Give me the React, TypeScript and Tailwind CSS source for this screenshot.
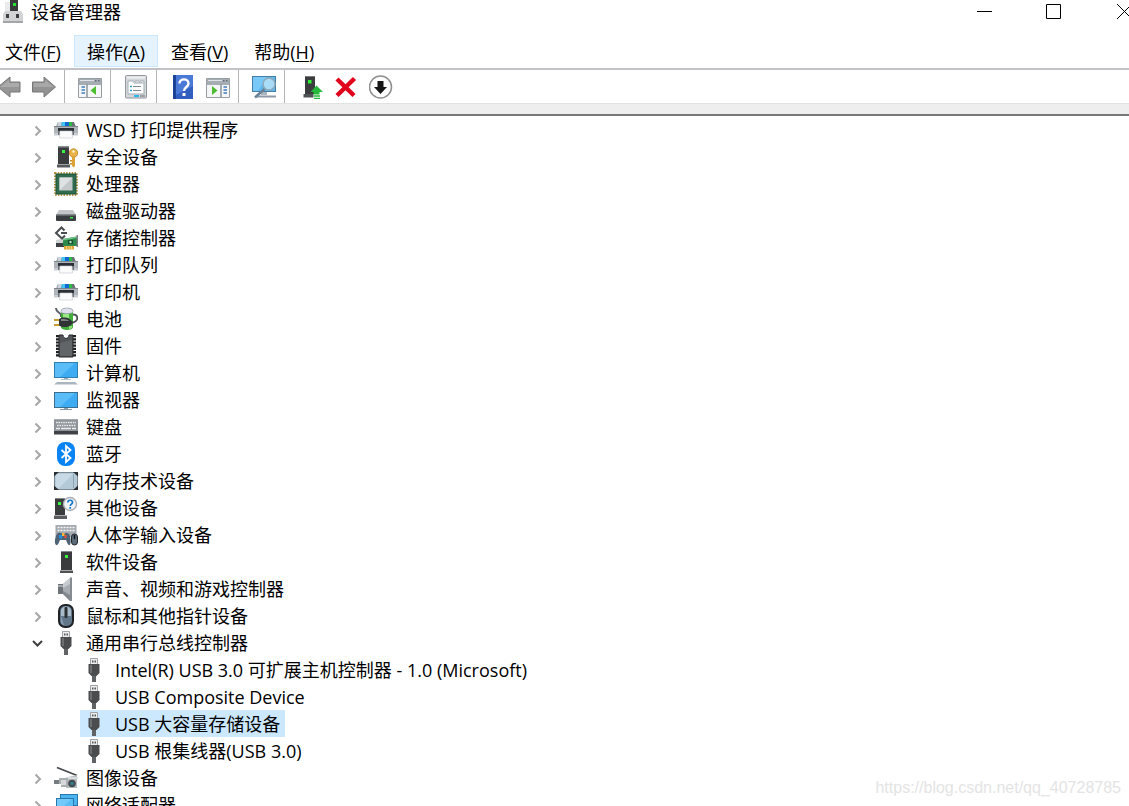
import { useState } from "react";
import type { ReactNode } from "react";
import clsx from "clsx";

type Device = { name: string; icon: ReactNode; children?: string[] };

const PrinterIcon = () => (
  <svg className="h-6 w-6" viewBox="0 0 24 24">
    <path d="M4 4h16l2 5H2z" fill="#6a7076" />
    <path d="M4 4h4L7 9H3z" fill="#c9d4dc" />
    <path d="M8 4h3.500v5H7z" fill="#3ec3f5" />
    <path d="M11 4h4v5h-4z" fill="#1467d0" />
    <path d="M15 4h2.500l1 5H15z" fill="#27c043" />
    <path d="M0 8h24v9H0z" fill="#aeb4ba" />
    <path d="M0 8h24v1H0z" fill="#7d848a" />
    <path d="M0 15h24v2.500H0z" fill="#c8ccd0" />
    <path d="M4 10h16v3H4z" fill="#2b3036" />
    <path d="M4 13h2v4H4zM18 13h2v4h-2z" fill="#6d737a" />
    <path d="M6 13h12l.5 7h-13z" fill="#fbfbfc" stroke="#c4c8cc" strokeWidth=".6" />
  </svg>
);

const SecurityIcon = () => (
  <svg className="h-6 w-6" viewBox="0 0 24 24">
    <path d="M4 1h11v18H4z" fill="#3a3c3e" />
    <path d="M4 1h11v1.500H4z" fill="#8a8e91" />
    <path d="M3 19h13v3.500H3z" fill="#56595b" />
    <path d="M3 19h13v1H3z" fill="#a0a3a5" />
    <path d="M8 5h3v3H8z" fill="#39f53f" />
    <circle cx="19.500" cy="8" r="4.200" fill="#e9b54a" stroke="#b87d1b" strokeWidth=".8" />
    <circle cx="19.500" cy="6.500" r="1.300" fill="#fff3d0" />
    <path d="M18 12h3v9l-1.500 1.500L18 21z" fill="#dda338" />
    <path d="M16 15h2v1.500h-2zM16 18h2v1.500h-2z" fill="#c48a22" />
  </svg>
);

const CpuIcon = () => (
  <svg className="h-6 w-6" viewBox="0 0 24 24">
    <rect x="1" y="1" width="22" height="22" fill="none" stroke="#b8923a" strokeWidth="2" strokeDasharray="1.400 1.400" />
    <rect x="2" y="2" width="20" height="20" fill="#2f6b4c" />
    <rect x="2" y="2" width="20" height="20" fill="none" stroke="#1f5238" />
    <rect x="5.500" y="5.500" width="13" height="13" fill="#c4c8ca" />
    <path d="M5.500 18.500l13-13h-13z" fill="#dfe2e3" />
  </svg>
);

const DiskIcon = () => (
  <svg className="h-6 w-6" viewBox="0 0 24 24">
    <path d="M5 11h14l3 5H2z" fill="#c3c6c8" />
    <path d="M2 15.500h20V21a1 1 0 0 1-1 1H3a1 1 0 0 1-1-1z" fill="#3b3e41" />
    <path d="M2 15.500h20v1H2z" fill="#8d9194" />
    <path d="M16 18h3v1.500h-3z" fill="#38e24a" />
  </svg>
);

const StorageIcon = () => (
  <svg className="h-6 w-6" viewBox="0 0 24 24">
    <path d="M2 14l4-1 5 2v6H2z" fill="#cfd2d4" />
    <path d="M2 17h9v4H2z" fill="#3d4043" />
    <path d="M10.500 4.500L7.500 1.500 2 7l6 5.500 3-3M7 7h6" fill="none" stroke="#4a4d50" strokeWidth="2" />
    <path d="M9 13l14-2.500V20H9z" fill="#2b8a4a" />
    <path d="M9 13l14-2.500V12L9 14.500z" fill="#6cc487" />
    <path d="M14 14h5v4h-5z" fill="#174d2a" />
    <circle cx="16.500" cy="16" r="1.200" fill="#b5e6c3" />
    <path d="M22.500 9H24v12h-1.500z" fill="#7c8083" />
    <path d="M10 20h10v3.500H10z" fill="#e0a636" />
    <path d="M12.500 20v3M15 20v3M17.500 20v3" stroke="#f6dc98" strokeWidth=".8" />
  </svg>
);

const BatteryIcon = () => (
  <svg className="h-6 w-6" viewBox="0 0 24 24">
    <path d="M2 1c0 4 3 4 5 6.500V10" fill="none" stroke="#5b6064" strokeWidth="2" />
    <path d="M7 4c0-4 12-4 12 0v16c0 4-12 4-12 0z" fill="#43ad3c" />
    <path d="M7 4c0-4 12-4 12 0v1.500c-3 1.500-9 1.500-12 0z" fill="#dfe0ee" stroke="#8f92a3" strokeWidth=".6" />
    <path d="M9 7h6v4H9z" fill="#9ae884" />
    <path d="M15 19h3v2l-3 1.500z" fill="#89dc76" />
    <path d="M19 7.500c4.500 0 4.500 3 4 5-1 2.500-3 2.500-5 3.500" fill="none" stroke="#4c4f52" strokeWidth="1.800" />
    <path d="M0 13h6M0 18h6" stroke="#caa034" strokeWidth="2" />
    <path d="M5 12l3-1.500h3c3 0 5 2 8 4.500-1 3-4 5-8 5H8l-3-1.500z" fill="#303336" />
    <path d="M7 12h3c3 0 4 1 5 2H7z" fill="#7d8184" />
  </svg>
);

const FirmwareIcon = () => (
  <svg className="h-6 w-6" viewBox="0 0 24 24">
    <path d="M3.500 1v22M20.500 1v22" stroke="#1f2123" strokeWidth="3" strokeDasharray="2.200 1" />
    <path d="M5 1h4c0 4.500 6 4.500 6 0h4v22H5z" fill="#525558" stroke="#26282a" />
    <path d="M6 9l12-3v16H6z" fill="#6c6f72" opacity=".6" />
  </svg>
);

const ComputerIcon = () => (
  <svg className="h-6 w-6" viewBox="0 0 24 24">
    <rect x=".5" y="1.500" width="23" height="15" fill="#3dacf2" stroke="#2f7eb0" />
    <path d="M1 2h20L6 16H1z" fill="#5bbdf8" />
    <path d="M10 17h4v1h-4z" fill="#9ab0bd" />
    <path d="M7 18h10v1H7z" fill="#b3c1ca" />
    <path d="M3 21h18l3 2.500H0z" fill="#a9b6c0" />
  </svg>
);

const MonitorIcon = () => (
  <svg className="h-6 w-6" viewBox="0 0 24 24">
    <rect x=".5" y="4.500" width="23" height="15" fill="#3dacf2" stroke="#3a6f90" />
    <path d="M1 5h20L6 19H1z" fill="#5bbdf8" />
    <path d="M10 20h4v1h-4z" fill="#8ba3b1" />
    <path d="M6 21h12v1H6z" fill="#8497a3" />
  </svg>
);

const KeyboardIcon = () => (
  <svg className="h-6 w-6" viewBox="0 0 24 24">
    <path d="M0 4h24v15H0z" fill="#8d9399" />
    <path d="M0 4h24v1H0z" fill="#a6abb0" />
    <path d="M2 7.500h20M3 10.500h19" stroke="#eceef0" strokeWidth="1.400" strokeDasharray="1.600 .8" />
    <path d="M2 13.500h4M7 13.500h10M18 13.500h4" stroke="#eceef0" strokeWidth="1.400" />
    <path d="M0 16h24v3.500H0z" fill="#3f4347" />
  </svg>
);

const BluetoothIcon = () => (
  <svg className="h-6 w-6" viewBox="0 0 24 24">
    <rect x="3" y="0" width="18" height="24" rx="8" fill="#0a84f5" />
    <path d="M7.500 8l9 8-4.500 4V4l4.500 4-9 8" fill="none" stroke="#fff" strokeWidth="1.800" />
  </svg>
);

const MemoryIcon = () => (
  <svg className="h-6 w-6" viewBox="0 0 24 24">
    <rect x=".500" y="3.500" width="23" height="17" rx="1.500" fill="#b4cad8" stroke="#7c8993" />
    <path d="M2 5h17L5 19H2z" fill="#c8dae5" />
    <path d="M19.500 5v14" stroke="#91a6b4" />
    <path d="M0 3h5L0 7.500zM24 3h-5l5 4.500zM0 21h5l-5-4.500zM24 21h-5l5-4.500z" fill="#2c2f32" />
  </svg>
);

const UnknownIcon = () => (
  <svg className="h-6 w-6" viewBox="0 0 24 24">
    <path d="M1 2h10v17H1z" fill="#3a3c3e" />
    <path d="M1 2h10v1H1z" fill="#83878a" />
    <path d="M0 20h13v3H0z" fill="#5a5d5f" />
    <path d="M0 19h13v1H0z" fill="#aaa" />
    <path d="M4 6h3v3H4z" fill="#39f53f" />
    <circle cx="16" cy="8" r="6.500" fill="#f1f5f8" stroke="#a9afb3" strokeWidth="1.400" />
    <path d="M13.800 6.500c0-3 4.700-3 4.700 0 0 1.600-2.300 1.600-2.300 3.500" fill="none" stroke="#1979c9" strokeWidth="1.700" />
    <path d="M15.300 11h1.800v1.800h-1.800z" fill="#1979c9" />
  </svg>
);

const HidIcon = () => (
  <svg className="h-6 w-6" viewBox="0 0 24 24">
    <path d="M1.500 2h21v12h-21z" fill="#a3a9ae" />
    <path d="M3.500 4.500h17M3.500 7.500h17" stroke="#f6f7f8" strokeWidth="1.600" strokeDasharray="2 1" />
    <path d="M3 11c2-2 4-1 5-.5h2c1-.5 4-1 5 .5 2 3 2 9 1 11-2 1-3-3-4-5H6c-1 2-2 6-4 5-2-2-1-8 1-11z" fill="#4f6376" />
    <path d="M5 12h3v4l-3-1z" fill="#1f8fe0" />
    <path d="M8 10h2.500v3H8z" fill="#ffb83b" />
    <path d="M10.500 12h2v3h-2z" fill="#f0532c" />
    <rect x="17.500" y="11" width="6" height="11" rx="3" fill="#5a6a78" stroke="#23282d" />
    <path d="M20.500 12v4" stroke="#15191c" strokeWidth="1.500" />
  </svg>
);

const SoftwareIcon = () => (
  <svg className="h-6 w-6" viewBox="0 0 24 24">
    <path d="M7 2h11v18H7z" fill="#3a3c3e" />
    <path d="M7 1h11v1H7z" fill="#83878a" />
    <path d="M6 21h13v2H6z" fill="#4f5254" />
    <path d="M6 20h13v1H6z" fill="#aaa" />
    <path d="M11 5h3v3h-3z" fill="#39f53f" />
  </svg>
);

const SpeakerIcon = () => (
  <svg className="h-6 w-6" viewBox="0 0 24 24">
    <path d="M4 7h5v10H4z" fill="#6d7378" />
    <path d="M4 8h5v2H4z" fill="#a2a8ac" />
    <path d="M9 7l7-6v23l-7-7z" fill="#a6acb1" />
    <path d="M9 7l7-6v6l-7 4z" fill="#c6cbcf" />
    <path d="M9 14l7 4v6l-7-7z" fill="#82888d" />
    <path d="M16 .5h2v23.500h-2z" fill="#858b90" />
  </svg>
);

const MouseIcon = () => (
  <svg className="h-6 w-6" viewBox="0 0 24 24">
    <rect x="5" y="1" width="14" height="22" rx="6" fill="#62778a" stroke="#202326" strokeWidth="2" />
    <path d="M7 7c0-6 10-6 10 0v5H7z" fill="#a9bac8" />
    <path d="M7 12v5c0 2 1 4 3 4.500z" fill="#8da2b4" />
    <rect x="10.500" y="3" width="3" height="11" rx="1" fill="#2b3034" />
  </svg>
);

const UsbIcon = () => (
  <svg className="h-6 w-6" viewBox="0 0 24 24">
    <path d="M8.500.5h7V7h-7z" fill="#eceded" stroke="#a0a3a5" />
    <path d="M10 2.500h1.500v2H10zM12.500 2.500H14v2h-1.500z" fill="#55585a" />
    <path d="M6.500 6h11v9l-3 3h-5l-3-3z" fill="#4a4c4e" />
    <path d="M8 7h2v8H8z" fill="#6c6f71" />
    <path d="M10 18h4v6h-4z" fill="#606365" />
  </svg>
);

const ImagingIcon = () => (
  <svg className="h-6 w-6" viewBox="0 0 24 24">
    <path d="M3 1.500l20 8" stroke="#44484b" strokeWidth="1.800" />
    <path d="M14 11l9-2v13H12z" fill="#b9bdc0" />
    <path d="M12 11h12v2H12z" fill="#d9dcde" />
    <path d="M0 14h9v4H0z" fill="#777c80" />
    <path d="M5 12h9v9H7v-3H5z" fill="#a9aeb1" />
    <path d="M7 14h5v5H7z" fill="#d6d8da" />
    <circle cx="18" cy="17.500" r="3.800" fill="#44494d" />
    <circle cx="18" cy="17.500" r="1.700" fill="#2d7f92" />
  </svg>
);

const NetworkIcon = () => (
  <svg className="h-6 w-6" viewBox="0 0 24 24">
    <rect x="6.500" y="1.500" width="17" height="11" fill="#4bb4f0" stroke="#2878ab" />
    <rect x="2.500" y="5.500" width="17" height="12" fill="#58bdf5" stroke="#2878ab" />
    <path d="M3 6h14L6 17H3z" fill="#72c9fa" />
    <path d="M7 20h9v2H7z" fill="#8ba3b1" />
  </svg>
);

// toolbar glyphs

const BackIcon = () => (
  <svg className="h-6 w-[21px]" viewBox="3 0 21 24">
    <path d="M1 12L13 2v5h10v10H13v5z" fill="#969696" stroke="#777" />
    <path d="M12 5v3h10v4H3z" fill="#ababab" />
  </svg>
);

const ForwardIcon = () => (
  <svg className="h-6 w-6" viewBox="0 0 24 24">
    <path d="M23.500 12L12 2v5H.5v10H12v5z" fill="#929292" stroke="#777" />
    <path d="M13 5v3H1.500v4H22z" fill="#a8a8a8" />
  </svg>
);

const TreePaneIcon = () => (
  <svg className="h-6 w-6" viewBox="0 0 24 24">
    <path d="M.5 3.500h23v19H.5z" fill="#f5f6f7" stroke="#969da3" />
    <path d="M1 4h22v4H1z" fill="#a6adb5" />
    <path d="M2 5.500h14" stroke="#dfe3e6" />
    <path d="M17 5h1.500v1.500H17zM20 5h1.500v1.500H20z" fill="#5f6a76" />
    <path d="M1 9h22M9 9v13" stroke="#8b949c" strokeWidth="1.500" />
    <path d="M3.500 12H7M3.500 15H7M3.500 18H7" stroke="#3f7bc1" strokeWidth="1.500" />
    <path d="M18 11v9l-5.500-4.500z" fill="#4cbd31" />
  </svg>
);

const PropertiesIcon = () => (
  <svg className="h-6 w-6" viewBox="0 0 24 24">
    <rect x="1.500" y=".5" width="21" height="22.500" rx="1" fill="#d5d8db" stroke="#90969b" />
    <path d="M3 2.500h18" stroke="#eceeef" strokeWidth="2" />
    <path d="M4 6h6v2h10v11H4z" fill="#fff" stroke="#a3adb5" />
    <path d="M11 6h4v2M16 6h4v2" fill="#fff" stroke="#a3adb5" />
    <path d="M6 11.500h2M6 15.500h2" stroke="#32a4d8" strokeWidth="1.500" />
    <path d="M9 11.500h8M9 15.500h8" stroke="#7f8a93" />
    <path d="M10 21h5" stroke="#2fb8e9" strokeWidth="2" />
    <path d="M16 21h5" stroke="#9ba3a9" strokeWidth="2" />
  </svg>
);

const HelpIcon = () => (
  <svg className="h-6 w-6" viewBox="0 0 24 24">
    <path d="M3 0h20v24H3z" fill="#315fc0" />
    <path d="M3 0h3v24H3z" fill="#1d4397" />
    <path d="M6 0h17v11L6 20z" fill="#4b79d6" />
    <path d="M9.500 8.500c0-5.500 9-5.500 9 0 0 3.500-4.500 3.500-4.500 7.500" fill="none" stroke="#fff" strokeWidth="2.400" />
    <path d="M12.500 18h3v3h-3z" fill="#fff" />
  </svg>
);

const ActionPaneIcon = () => (
  <svg className="h-6 w-6" viewBox="0 0 24 24">
    <path d="M.5 3.500h23v19H.5z" fill="#f5f6f7" stroke="#969da3" />
    <path d="M1 4h22v4H1z" fill="#a6adb5" />
    <path d="M2 5.500h14" stroke="#dfe3e6" />
    <path d="M17 5h1.500v1.500H17zM20 5h1.500v1.500H20z" fill="#5f6a76" />
    <path d="M1 9h22M15 9v13" stroke="#8b949c" strokeWidth="1.500" />
    <path d="M17.500 12H21M17.500 15H21M17.500 18H21" stroke="#3f7bc1" strokeWidth="1.500" />
    <path d="M6 11v9l5.500-4.500z" fill="#4cbd31" />
  </svg>
);

const ScanIcon = () => (
  <svg className="h-6 w-6" viewBox="0 0 24 24">
    <rect x=".5" y="1.500" width="23" height="15" fill="#5bb9f0" stroke="#427fa8" />
    <path d="M1 2h14L6 16H1z" fill="#79c9f8" />
    <path d="M9 17h6v3H9z" fill="#aab6be" />
    <path d="M4 21.500h20" stroke="#8d9aa5" strokeWidth="2" />
    <circle cx="17" cy="9" r="6" fill="#a8dcf7" stroke="#8fa8b8" strokeWidth="1.500" />
    <path d="M12.500 14L3 22.500" stroke="#6b8397" strokeWidth="2.500" />
  </svg>
);

const UpdateIcon = () => (
  <svg className="h-6 w-6" viewBox="0 0 24 24">
    <path d="M4 1h10v18H4z" fill="#3a3c3e" />
    <path d="M4 1h10v1H4z" fill="#777b7e" />
    <path d="M2.500 19h10v3.500h-10z" fill="#4f5254" />
    <path d="M7 5h3.500v3.500H7z" fill="#2bf22f" />
    <path d="M9.500 17l6-6.500 6.500 6.500h-3.500v2.500h-6V17z" fill="#25b83a" />
    <path d="M13 21h6M13 23.500h6" stroke="#25b83a" strokeWidth="1.500" />
  </svg>
);

const RemoveIcon = () => (
  <svg className="h-6 w-6" viewBox="0 0 24 24">
    <path d="M2 4l17 16.500M19.500 3.500L2 20.500" stroke="#e1041d" strokeWidth="4.500" />
  </svg>
);

const DisableIcon = () => (
  <svg className="h-6 w-6" viewBox="0 0 24 24">
    <circle cx="11.500" cy="12" r="11" fill="#fdfdfd" stroke="#8f8f8f" strokeWidth="1.500" />
    <path d="M8.500 6h6v6H18l-6.500 7L5 12h3.500z" fill="#161616" />
  </svg>
);

const AppIcon = () => (
  <svg className="h-6 w-6" viewBox="0 0 24 24">
    <path d="M10 0h8v12h-8z" fill="#37393b" />
    <path d="M13 3h3v3h-3z" fill="#27e034" />
    <path d="M5 2h5v9H5z" fill="#e9eaeb" />
    <path d="M5 11h16l2 3v9H3v-9z" fill="#d1d3d5" />
    <path d="M3 21h20v2H3z" fill="#a3a6a9" />
    <path d="M6 14h3v4H6zM16 14h3v4h-3z" fill="#3c3f42" />
  </svg>
);

const devices: Device[] = [
  { name: "WSD 打印提供程序", icon: <PrinterIcon /> },
  { name: "安全设备", icon: <SecurityIcon /> },
  { name: "处理器", icon: <CpuIcon /> },
  { name: "磁盘驱动器", icon: <DiskIcon /> },
  { name: "存储控制器", icon: <StorageIcon /> },
  { name: "打印队列", icon: <PrinterIcon /> },
  { name: "打印机", icon: <PrinterIcon /> },
  { name: "电池", icon: <BatteryIcon /> },
  { name: "固件", icon: <FirmwareIcon /> },
  { name: "计算机", icon: <ComputerIcon /> },
  { name: "监视器", icon: <MonitorIcon /> },
  { name: "键盘", icon: <KeyboardIcon /> },
  { name: "蓝牙", icon: <BluetoothIcon /> },
  { name: "内存技术设备", icon: <MemoryIcon /> },
  { name: "其他设备", icon: <UnknownIcon /> },
  { name: "人体学输入设备", icon: <HidIcon /> },
  { name: "软件设备", icon: <SoftwareIcon /> },
  { name: "声音、视频和游戏控制器", icon: <SpeakerIcon /> },
  { name: "鼠标和其他指针设备", icon: <MouseIcon /> },
  {
    name: "通用串行总线控制器",
    icon: <UsbIcon />,
    children: [
      "Intel(R) USB 3.0 可扩展主机控制器 - 1.0 (Microsoft)",
      "USB Composite Device",
      "USB 大容量存储设备",
      "USB 根集线器(USB 3.0)",
    ],
  },
  { name: "图像设备", icon: <ImagingIcon /> },
  { name: "网络适配器", icon: <NetworkIcon /> },
];

const menus = [
  { label: "文件", mnemonic: "F" },
  { label: "操作", mnemonic: "A" },
  { label: "查看", mnemonic: "V" },
  { label: "帮助", mnemonic: "H" },
];

const toolGroups = [
  [
    { label: "显示/隐藏控制台树", icon: <TreePaneIcon /> },
  ],
  [
    { label: "属性", icon: <PropertiesIcon /> },
  ],
  [
    { label: "帮助", icon: <HelpIcon /> },
    { label: "显示/隐藏操作窗格", icon: <ActionPaneIcon /> },
  ],
  [
    { label: "扫描检测硬件改动", icon: <ScanIcon /> },
  ],
];

const Chevron = ({ open }: { open: boolean }) => (
  <svg className="h-3 w-3" viewBox="0 0 12 12" fill="none" strokeWidth="2">
    {open ? <path d="M1 4l4.500 4.500L10 4" stroke="#404040" /> : <path d="M3.500 2.500L8 7l-4.500 4.500" stroke="#a6a6a6" />}
  </svg>
);

const Separator = () => <span className="w-px self-stretch bg-[#b4b4b4]" />;

export default function App() {
  const [activeMenu, setActiveMenu] = useState("A");
  const [expanded, setExpanded] = useState<Set<string>>(new Set(["通用串行总线控制器"]));
  const [selected, setSelected] = useState("USB 大容量存储设备");

  const toggle = (name: string) => {
    setExpanded((prev) => {
      const next = new Set(prev);
      if (next.has(name)) next.delete(name);
      else next.add(name);
      return next;
    });
  };

  return (
    <div className="relative flex h-screen flex-col overflow-hidden bg-white font-['Open_Sans','Noto_Sans_CJK_SC',sans-serif] text-[18px] leading-6 text-black">
      <header className="flex h-[35px] shrink-0 items-start justify-between">
        <div className="flex items-center gap-[7px]">
          <AppIcon />
          <h1>设备管理器</h1>
        </div>
        <div className="flex">
          <button type="button" aria-label="最小化" className="flex h-6 w-[69px] items-center justify-center">
            <svg className="h-4 w-4" viewBox="0 0 16 16"><path d="M0 7.500h15" stroke="#000" /></svg>
          </button>
          <button type="button" aria-label="最大化" className="flex h-6 w-[69px] items-center justify-center">
            <svg className="h-4 w-4" viewBox="0 0 16 16"><path d="M.5.5h14v14H.5z" fill="none" stroke="#000" /></svg>
          </button>
          <button type="button" aria-label="关闭" className="flex h-6 w-[41px] items-center justify-end">
            <svg className="h-4 w-3" viewBox="0 0 12 16"><path d="M0 0l15 15M15 0L0 15" stroke="#000" /></svg>
          </button>
        </div>
      </header>

      <nav className="flex h-[33px] shrink-0 pb-px">
        {menus.map((m) => (
          <button
            key={m.mnemonic}
            type="button"
            onClick={() => setActiveMenu(m.mnemonic)}
            className={clsx(
              "border px-3 pt-px first:pl-1",
              activeMenu === m.mnemonic ? "border-[#cce8ff] bg-[#e5f3ff]" : "border-transparent"
            )}
          >
            {m.label}(<span className="underline underline-offset-2">{m.mnemonic}</span>)
          </button>
        ))}
      </nav>

      <div className="flex h-[35px] shrink-0 items-center border-t-2 border-[#c0c2c6]">
        <div className="flex items-center gap-[11px] pr-2">
          <button type="button" aria-label="后退"><BackIcon /></button>
          <button type="button" aria-label="前进"><ForwardIcon /></button>
        </div>
        <Separator />
        {toolGroups.map((group) => (
          <div key={group[0].label} className="flex items-center self-stretch">
            <div className="flex gap-3 pr-2 pl-[13px]">
              {group.map((t) => (
                <button key={t.label} type="button" aria-label={t.label}>{t.icon}</button>
              ))}
            </div>
            <Separator />
          </div>
        ))}
        <div className="flex gap-[10px] pl-4">
          <button type="button" aria-label="更新驱动程序"><UpdateIcon /></button>
          <button type="button" aria-label="卸载设备"><RemoveIcon /></button>
          <button type="button" aria-label="禁用设备"><DisableIcon /></button>
        </div>
      </div>
      <div className="h-[13px] shrink-0 border-t border-b-2 border-t-[#e2e2e2] border-b-[#787878] bg-[#eeeeee]" />

      <main className="min-h-0 flex-1 overflow-hidden">
        <ul className="pl-8">
          {devices.map((d) => (
            <li key={d.name}>
              <button
                type="button"
                aria-expanded={expanded.has(d.name)}
                onClick={() => toggle(d.name)}
                className="flex h-[27px] items-center whitespace-nowrap"
              >
                <Chevron open={expanded.has(d.name)} />
                <span className="mr-2 ml-[10px]">{d.icon}</span>
                {d.name}
              </button>
              {expanded.has(d.name) && d.children && (
                <ul className="pl-12">
                  {d.children.map((child) => (
                    <li key={child}>
                      <button
                        type="button"
                        onClick={() => setSelected(child)}
                        className={clsx(
                          "flex h-[27px] items-center gap-[9px] pr-[5px] pl-[2px] whitespace-nowrap",
                          selected === child && "bg-[#cce8ff]"
                        )}
                      >
                        <UsbIcon />
                        {child}
                      </button>
                    </li>
                  ))}
                </ul>
              )}
            </li>
          ))}
        </ul>
      </main>

      <a href="https://blog.csdn.net/qq_40728785" className="absolute right-2 bottom-2 font-['Liberation_Sans',sans-serif] text-[16px] leading-5 text-[#e4e4e4]">
        https://blog.csdn.net/qq_40728785
      </a>
    </div>
  );
}
